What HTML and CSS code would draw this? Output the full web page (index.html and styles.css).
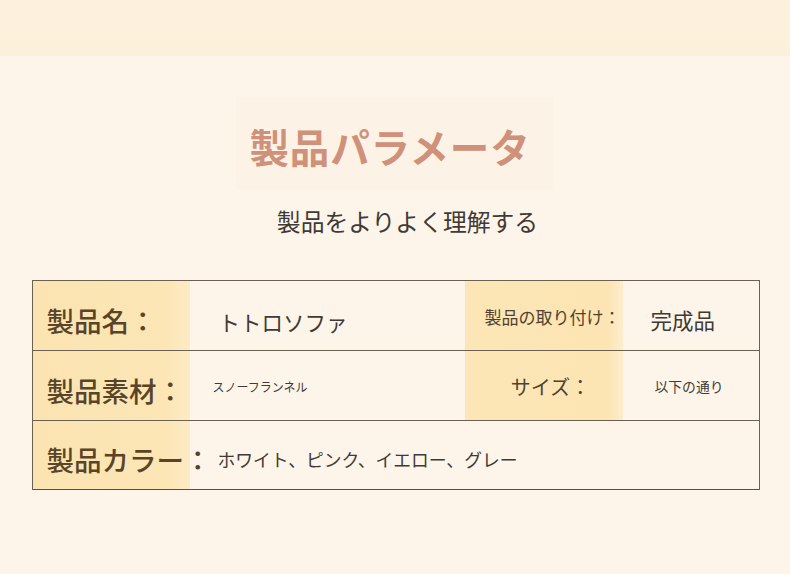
FILE: index.html
```html
<!DOCTYPE html>
<html lang="ja">
<head>
<meta charset="utf-8">
<link rel="stylesheet" href="styles.css">
</head>
<body>
<div class="band"></div>
<main class="page">
  <div class="title-box"><h1 class="title">製品パラメータ</h1></div>
  <p class="subtitle">製品をよりよく理解する</p>
  <div class="table">
    <div class="row row-4">
      <div class="label">製品名：</div>
      <div class="value v-name">トトロソファ</div>
      <div class="label2 l-mount">製品の取り付け：</div>
      <div class="value2 v-mount">完成品</div>
    </div>
    <div class="row row-4">
      <div class="label">製品素材：</div>
      <div class="value v-mat">スノーフランネル</div>
      <div class="label2 l-size">サイズ：</div>
      <div class="value2 v-size">以下の通り</div>
    </div>
    <div class="row row-2">
      <div class="label label-wide">製品カラー：</div>
      <div class="value v-color">ホワイト、ピンク、イエロー、グレー</div>
    </div>
  </div>
</main>
</body>
</html>
```
FILE: styles.css
```css
* { box-sizing: border-box; margin: 0; padding: 0; }
html, body { width: 790px; height: 574px; overflow: hidden; }
body {
  background: #fdf5ea;
  font-family: "Noto Sans CJK JP", "Noto Sans", sans-serif;
}
.band {
  height: 56px;
  background: linear-gradient(#fdf1dd, #fdf0da);
}
.page {
  display: flex;
  flex-direction: column;
  align-items: center;
}
.title-box {
  margin-top: 41px;
  width: 317px;
  height: 93px;
  background: #fcf3e6;
  display: flex;
  align-items: center;
  justify-content: center;
  margin-right: 2px;
}
.title {
  font-size: 39.5px;
  font-weight: 700;
  color: #d0917b;
  letter-spacing: 0.8px;
  line-height: 1;
  margin-top: 4px;
  margin-right: 8px;
}
.subtitle {
  margin-top: 16px;
  font-size: 23.8px;
  line-height: 30px;
  color: #3f3a36;
  margin-left: 25px;
}
.table {
  margin-top: 44px;
  width: 728px;
  margin-left: 1px;
  border: 1px solid #6c6052;
  border-bottom: none;
}
.row {
  display: grid;
  height: 70px;
  border-bottom: 1px solid #6c6052;
  align-items: stretch;
}
.row:last-child { height: 69px; border-bottom: 1px solid #5a4f44; }
.row-4 { grid-template-columns: 157px 275px 158px 1fr; }
.row-2 { grid-template-columns: 157px 1fr; }
.label, .label2 {
  background: linear-gradient(90deg, #fbe4b2 0%, #fce6b5 85%, #fdebc6 100%);
  color: #5a4428;
  display: flex;
  align-items: center;
  padding-top: 8px;
  white-space: nowrap;
  font-weight: 500;
}
.label {
  font-size: 27.5px;
  padding-left: 14px;
}
.label-wide { overflow: visible; }
.label2 {
  justify-content: center;
  padding-left: 14px;
  color: #4f4232;
  font-weight: 400;
  background: linear-gradient(90deg, #fce6b8 0%, #fce6b5 10%, #fce5b3 90%, #fdedcd 100%);
}
.l-mount { font-size: 17px; padding-top: 2px; padding-left: 18px; }
.l-size { font-size: 20px; padding-top: 2px; }
.value, .value2 {
  color: #3f3a36;
  display: flex;
  align-items: center;
  white-space: nowrap;
}
.v-name { font-size: 21.5px; padding-left: 29px; padding-top: 12px; }
.v-mat { font-size: 12px; padding-left: 23px; padding-top: 1px; }
.v-mount { font-size: 21.5px; padding-left: 28px; padding-top: 7px; }
.v-size { font-size: 13.8px; padding-left: 32px; padding-top: 0; }
.v-color { font-size: 17.8px; padding-left: 28px; padding-top: 8px; }
```
